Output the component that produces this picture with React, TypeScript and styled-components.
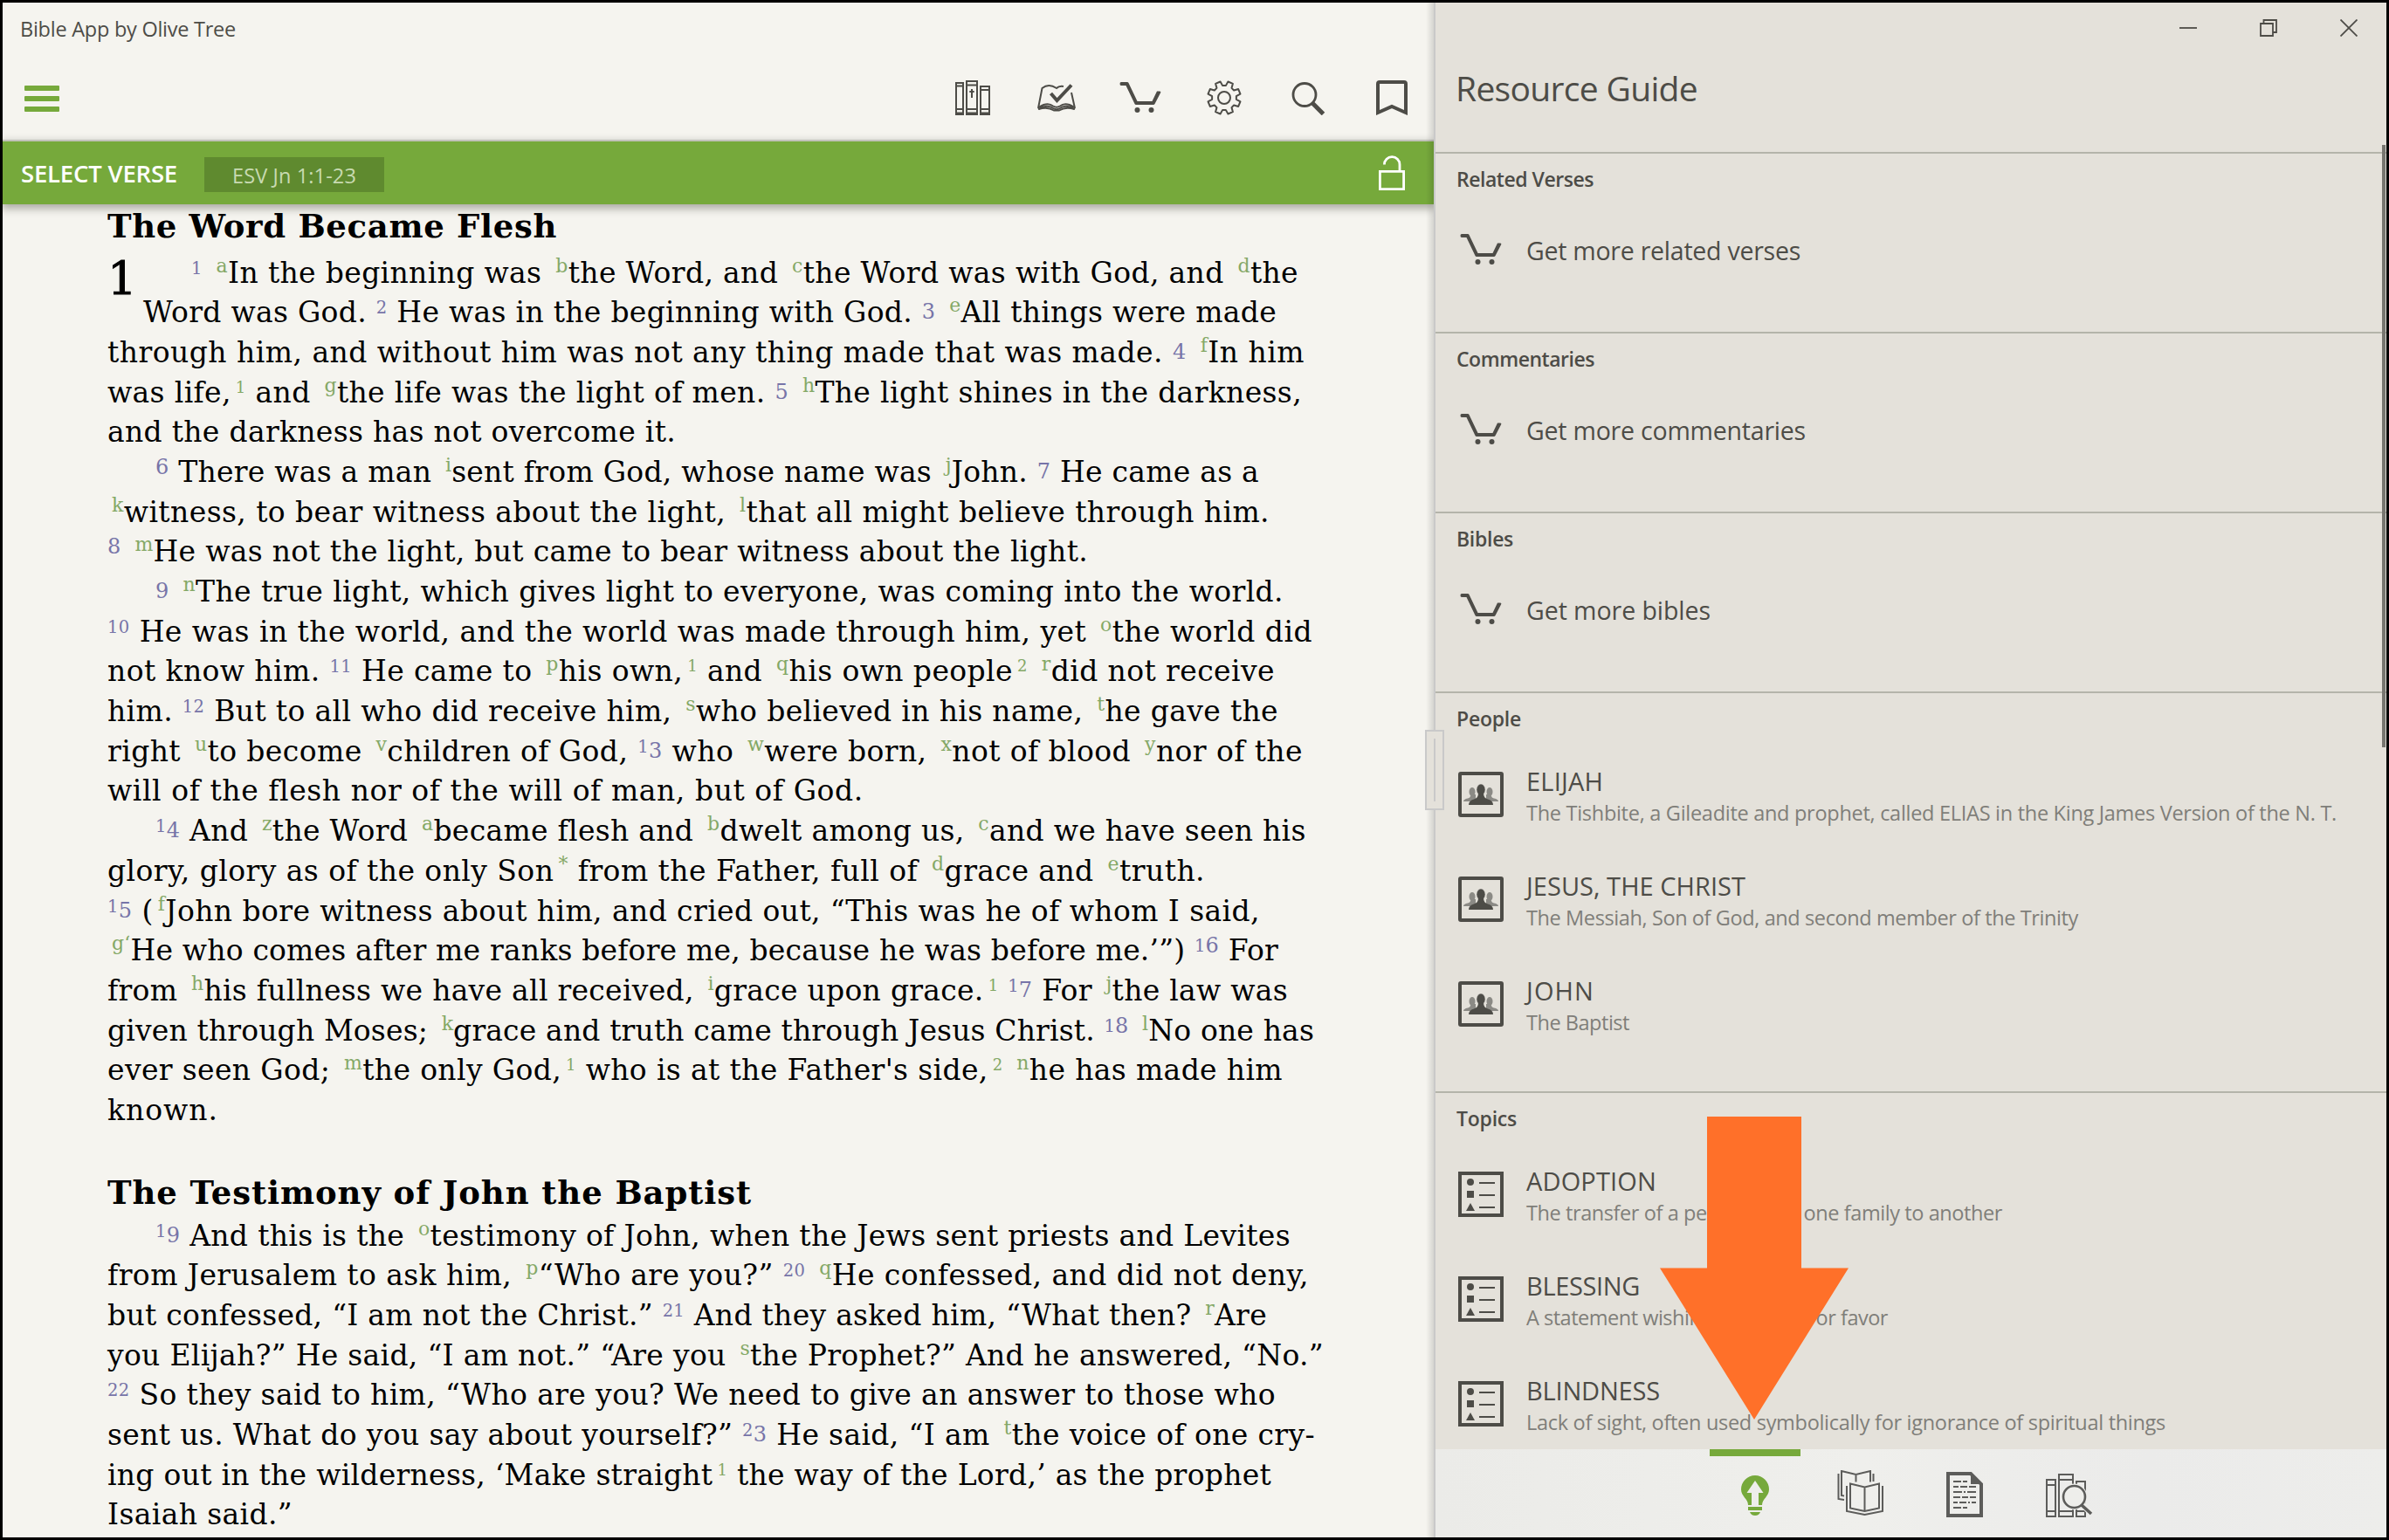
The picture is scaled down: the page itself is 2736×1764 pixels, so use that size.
import React, { useLayoutEffect, useRef, useState } from "react";
import styled, { createGlobalStyle, css } from "styled-components";

const ink = "#4d4c47";
const green = "#76a93b";
const rule = "#b4b4aa";
const edge = "#c9c9c9";
const sans = `"Open Sans", "Noto Sans", sans-serif`;
const serif = `"DejaVu Serif", serif`;

const Global = createGlobalStyle`
  * { box-sizing: border-box; }
  body { margin: 0; background: #000; }
  svg { display: block; flex: none; }
`;

/* ---------- text that is tracked to a measured width ---------- */

const Tracked = styled.span`
  white-space: pre;
`;

function Fit({ width, children }: { width: number; children: React.ReactNode }) {
  const ref = useRef<HTMLSpanElement>(null);
  const [spacing, setSpacing] = useState(0);
  useLayoutEffect(() => {
    const el = ref.current;
    if (!el) return;
    el.style.letterSpacing = "0px";
    const natural = el.getBoundingClientRect().width;
    const count = (el.textContent || "").length;
    const next = (width - natural) / Math.max(1, count);
    el.style.letterSpacing = `${next}px`;
    setSpacing(next);
  }, [width]);
  return (
    <Tracked ref={ref} style={{ letterSpacing: spacing }}>
      {children}
    </Tracked>
  );
}

/* ---------- window ---------- */

const Window = styled.div`
  display: grid;
  grid-template-columns: 1639px 2px 1fr;
  grid-template-rows: 1758px;
  width: 2736px;
  height: 1764px;
  border: 3px solid #000;
  overflow: hidden;
  font-family: ${sans};
  color: ${ink};
`;

const Reader = styled.main`
  position: relative;
  display: flex;
  flex-direction: column;
  min-width: 0;
  overflow: hidden;
  background: #f5f4ef;
  &::after {
    content: "";
    position: absolute;
    inset: 0 0 0 auto;
    width: 9px;
    background: linear-gradient(to right, rgba(0, 0, 0, 0), rgba(0, 0, 0, 0.13));
  }
`;

const Divider = styled.div`
  position: relative;
  background: ${edge};
`;

const Handle = styled.div`
  position: absolute;
  top: 833px;
  left: -10px;
  z-index: 2;
  display: flex;
  justify-content: center;
  width: 22px;
  height: 92px;
  padding: 8px 0;
  border: 2px solid ${edge};
  background: #e4e1da;
  &::before {
    content: "";
    width: 2px;
    background: ${edge};
  }
`;

const AppTitle = styled.div`
  height: 59px;
  padding: 1px 0 0 20px;
  font-size: 23.5px;
  line-height: 59px;
`;

const Toolbar = styled.div`
  display: flex;
  align-items: center;
  height: 98px;
  padding: 2px 0 0 25px;
`;

const Spacer = styled.div`
  flex: 1;
`;

const ToolButton = styled.div`
  display: flex;
  justify-content: center;
  width: 96px;
`;

const VerseBar = styled.div`
  position: relative;
  display: flex;
  flex: none;
  align-items: center;
  height: 74px;
  padding-left: 21px;
  border-top: 2px solid #c2c2ba;
  background: ${green};
  box-shadow: 0 4px 9px 1px rgba(60, 60, 50, 0.4);
`;

const VerseBarLabel = styled.div`
  width: 210px;
  padding-top: 2px;
  color: #fff;
  font-size: 27.5px;
  font-weight: 600;
  line-height: 40px;
`;

const VerseBadge = styled.div`
  width: 206px;
  height: 40px;
  margin-top: 4px;
  padding: 1px 0 0 32px;
  background: #5f8a2f;
  color: #c8dab1;
  font-size: 23.5px;
  line-height: 40px;
`;

const LockSlot = styled.div`
  padding-right: 33px;
`;

/* ---------- scripture ---------- */

const Scripture = styled.article`
  padding: 2px 0 0 120px;
  color: #000;
  font-family: ${serif};
  font-size: 33px;
`;

const Heading = styled.h2<{ $before?: number; $after: number }>`
  height: 46px;
  margin: ${(p) => p.$before || 0}px 0 ${(p) => p.$after}px;
  font-size: 37px;
  font-weight: 700;
  line-height: 46px;
`;

const Line = styled.div<{ $indent: number }>`
  height: 45.7px;
  line-height: 45.7px;
  text-indent: ${(p) => p.$indent}px;
  white-space: nowrap;
`;

const ChapterNumber = styled.div`
  float: left;
  width: 42px;
  height: 88px;
  font-size: 53px;
  line-height: 58px;
  -webkit-text-stroke: 1px #000;
`;

const Raised = styled.span<{ $kind: "low" | "tall" | "hang" | "letter" | "noteDigit" }>`
  line-height: 0;
  ${(p) =>
    ({
      low: css`font-size: 19.5px; vertical-align: 10px;`,
      tall: css`font-size: 24px; vertical-align: 9px;`,
      hang: css`font-size: 24px; vertical-align: 4px;`,
      letter: css`font-size: 22px; vertical-align: 12px;`,
      noteDigit: css`font-size: 18px; vertical-align: 11px;`,
    })[p.$kind]}
`;

const VerseNumber = styled.span`
  color: #7774a8;
`;

const Note = styled.span`
  margin-left: 5px;
  color: #84a866;
`;

const digitKind = (d: string) => ("012".includes(d) ? "low" : "68".includes(d) ? "tall" : "hang");

/* "[12]" is a verse number, "{a}" a note mark; everything else is body text. */
function Markup({ text }: { text: string }) {
  const parts = text.split(/(\[\d+\]|\{[^}]+\})/).filter(Boolean);
  return (
    <>
      {parts.map((part, i) => {
        if (part[0] === "[") {
          return (
            <VerseNumber key={i}>
              {part.slice(1, -1).split("").map((d, j) => (
                <Raised key={j} $kind={digitKind(d)}>{d}</Raised>
              ))}
            </VerseNumber>
          );
        }
        if (part[0] === "{") {
          const mark = part.slice(1, -1);
          return (
            <Note key={i}>
              <Raised $kind={/\d/.test(mark) ? "noteDigit" : "letter"}>{mark}</Raised>
            </Note>
          );
        }
        return part;
      })}
    </>
  );
}

type LineData = [text: string, start: number, end: number];

const LEFT = 123;

const first: LineData[] = [
  ["[1] {a}In the beginning was {b}the Word, and {c}the Word was with God, and {d}the", 219, 1487],
  ["Word was God. [2] He was in the beginning with God. [3] {e}All things were made", 164, 1462],
  ["through him, and without him was not any thing made that was made. [4] {f}In him", 123, 1494],
  ["was life,{1} and {g}the life was the light of men. [5] {h}The light shines in the darkness,", 123, 1491],
  ["and the darkness has not overcome it.", 123, 774],
  ["[6] There was a man {i}sent from God, whose name was {j}John. [7] He came as a", 178, 1442],
  ["{k}witness, to bear witness about the light, {l}that all might believe through him.", 123, 1454],
  ["[8] {m}He was not the light, but came to bear witness about the light.", 123, 1246],
  ["[9] {n}The true light, which gives light to everyone, was coming into the world.", 178, 1470],
  ["[10] He was in the world, and the world was made through him, yet {o}the world did", 123, 1503],
  ["not know him. [11] He came to {p}his own,{1} and {q}his own people{2} {r}did not receive", 123, 1460],
  ["him. [12] But to all who did receive him, {s}who believed in his name, {t}he gave the", 123, 1464],
  ["right {u}to become {v}children of God, [13] who {w}were born, {x}not of blood {y}nor of the", 123, 1492],
  ["will of the flesh nor of the will of man, but of God.", 123, 988],
  ["[14] And {z}the Word {a}became flesh and {b}dwelt among us, {c}and we have seen his", 178, 1495],
  ["glory, glory as of the only Son{*} from the Father, full of {d}grace and {e}truth.", 123, 1380],
  ["[15] ({f}John bore witness about him, and cried out, “This was he of whom I said,", 123, 1443],
  ["{g‘}He who comes after me ranks before me, because he was before me.’”) [16] For", 123, 1464],
  ["from {h}his fullness we have all received, {i}grace upon grace.{1} [17] For {j}the law was", 123, 1475],
  ["given through Moses; {k}grace and truth came through Jesus Christ. [18] {l}No one has", 123, 1505],
  ["ever seen God; {m}the only God,{1} who is at the Father's side,{2} {n}he has made him", 123, 1469],
  ["known.", 123, 250],
];

const second: LineData[] = [
  ["[19] And this is the {o}testimony of John, when the Jews sent priests and Levites", 178, 1478],
  ["from Jerusalem to ask him, {p}“Who are you?” [20] {q}He confessed, and did not deny,", 123, 1499],
  ["but confessed, “I am not the Christ.” [21] And they asked him, “What then? {r}Are", 123, 1451],
  ["you Elijah?” He said, “I am not.” “Are you {s}the Prophet?” And he answered, “No.”", 123, 1516],
  ["[22] So they said to him, “Who are you? We need to give an answer to those who", 123, 1461],
  ["sent us. What do you say about yourself?” [23] He said, “I am {t}the voice of one cry-", 123, 1506],
  ["ing out in the wilderness, ‘Make straight{1} the way of the Lord,’ as the prophet", 123, 1456],
  ["Isaiah said.”", 123, 335],
];

function Lines({ lines, capLines = 0 }: { lines: LineData[]; capLines?: number }) {
  return (
    <>
      {lines.map(([text, start, end], i) => (
        <Line key={i} $indent={start - LEFT - (i < capLines ? 42 : 0)}>
          <Fit width={end - start}>
            <Markup text={text} />
          </Fit>
        </Line>
      ))}
    </>
  );
}

/* ---------- resource guide ---------- */

const Guide = styled.aside`
  position: relative;
  display: flex;
  flex-direction: column;
  min-width: 0;
  background: #e4e1da;
`;

const WindowControls = styled.div`
  display: flex;
  flex: none;
  justify-content: flex-end;
  gap: 72px;
  height: 59px;
  padding: 19px 33px 0 0;
`;

const GuideTitle = styled.h1`
  flex: none;
  height: 112px;
  margin: 0;
  padding: 13px 0 0 23px;
  font-size: 39px;
  font-weight: 400;
  line-height: 52px;
`;

const Section = styled.section<{ $height: number }>`
  flex: none;
  height: ${(p) => p.$height}px;
  border-top: 2px solid ${rule};
`;

const SectionTitle = styled.h3`
  height: 58px;
  margin: 0;
  padding-left: 24px;
  font-size: 23px;
  font-weight: 600;
  line-height: 59px;
`;

const Entry = styled.div`
  display: flex;
  height: 120px;
  padding: 32px 0 0 26px;
`;

const EntryIcon = styled.div<{ $shift?: number }>`
  width: 78px;
  padding-left: ${(p) => p.$shift || 0}px;
`;

const EntryName = styled.div`
  height: 38px;
  margin-top: -7px;
  font-size: 29px;
  line-height: 36px;
`;

const EntryNote = styled.div`
  color: #7f7e79;
  font-size: 23.5px;
  line-height: 33px;
`;

const StoreLink = styled.div`
  padding-top: 1px;
  font-size: 28.5px;
  line-height: 40px;
`;

const ListArea = styled.div`
  flex: 1;
  min-height: 0;
  overflow: hidden;
`;

const ScrollThumb = styled.div`
  position: absolute;
  top: 163px;
  right: 1px;
  width: 4px;
  height: 690px;
  background: #76756f;
`;

const Tabs = styled.nav`
  display: flex;
  flex: none;
  justify-content: center;
  gap: 16px;
  height: 101px;
  padding-left: 3px;
  background: linear-gradient(90deg, #ebebe8, #efefec 45%, #ebebea 75%, #ededeb);
`;

const Tab = styled.div<{ $active?: boolean }>`
  display: flex;
  justify-content: center;
  width: 104px;
  border-top: 8px solid ${(p) => (p.$active ? green : "transparent")};
`;

const Arrow = styled.svg`
  position: absolute;
  left: 257px;
  top: 1276px;
`;

/* ---------- icons ---------- */

const MenuIcon = () => (
  <svg width="40" height="40" fill={green}>
    <rect y="6" width="40" height="6" rx="1" />
    <rect y="18" width="40" height="6" rx="1" />
    <rect y="30" width="40" height="6" rx="1" />
  </svg>
);

const LibraryIcon = () => (
  <svg width="40" height="40" fill="none" stroke={ink} strokeWidth="2">
    <path d="M1 3H9V39H1ZM1 6.500H9M1 33H9M1 37.500H9" />
    <path d="M13 1H25V39H13ZM13 5.500H25M13 33H25M13 37.500H25M19 10V20M16.300 13H21.700" />
    <path d="M29 7H39V39H29ZM29 11H39M29 33H39M29 37.500H39" />
  </svg>
);

const PlanIcon = () => (
  <svg width="44" height="40" fill="none" stroke={ink} strokeWidth="2">
    <path d="M30 7Q25 6 22 9Q13 3 5.500 9L1 32M39 14L43 32" />
    <path d="M1 33Q12 27 18 32Q22 34.500 26 32Q32 27 43 33M2 30.500Q12 24.500 18 29.500Q22 32 26 29.500Q32 24.500 42 30.500" />
    <path d="M1.500 33Q12 30 19 34.500H25Q32 30 42.500 33" />
    <path d="M15.500 15L22.500 23L39 5.500" strokeWidth="4" />
  </svg>
);

const CartIcon = () => (
  <svg width="48" height="40" fill={ink}>
    <path d="M2 2H9Q10 2 10.500 3L20.500 24H37.500L43 12.500H46Q48 12.500 47 14.500L40.500 27Q40 28 39 28H19Q18 28 17.500 27L7.500 6H2Q0.500 6 0.500 4T2 2Z" />
    <circle cx="20.500" cy="34" r="3" />
    <circle cx="36.500" cy="34" r="3" />
  </svg>
);

const gearPath = (() => {
  const teeth = 8;
  const points: string[] = [];
  for (let i = 0; i < teeth; i++) {
    const mid = (i + 0.5) * (360 / teeth);
    [[-15, 14], [-9, 19], [9, 19], [15, 14]].forEach(([offset, radius]) => {
      const a = ((mid + offset) * Math.PI) / 180;
      points.push(`${(20 + radius * Math.sin(a)).toFixed(2)} ${(20 - radius * Math.cos(a)).toFixed(2)}`);
    });
  }
  return `M${points.join("L")}Z`;
})();

const GearIcon = () => (
  <svg width="40" height="40" fill="none" stroke={ink} strokeWidth="2" strokeLinejoin="round">
    <path d={gearPath} />
    <circle cx="20" cy="20" r="7" />
  </svg>
);

const SearchIcon = () => (
  <svg width="40" height="40" fill="none" stroke={ink}>
    <circle cx="16" cy="16.500" r="13" strokeWidth="2.800" />
    <path d="M25 26L37.500 38.500" strokeWidth="5" />
  </svg>
);

const BookmarkIcon = () => (
  <svg width="36" height="40" fill="none" stroke={ink} strokeWidth="4">
    <path d="M2 37V4Q2 2 4 2H32Q34 2 34 4V37L18 30Z" />
  </svg>
);

const LockIcon = () => (
  <svg width="30" height="40" fill="none" stroke="#fff" strokeWidth="2.800">
    <path d="M1.400 18.400H28.600V38.600H1.400Z" />
    <path d="M24 18V10.500A8.800 8.800 0 0 0 6.400 10.500" />
  </svg>
);

const MinimizeIcon = () => (
  <svg width="20" height="20" stroke={ink} strokeWidth="1.800">
    <path d="M0 10H20" />
  </svg>
);

const RestoreIcon = () => (
  <svg width="20" height="20" fill="none" stroke={ink} strokeWidth="1.800">
    <path d="M1 5H15V19H1ZM4.500 5V1H19V15H15" />
  </svg>
);

const CloseIcon = () => (
  <svg width="20" height="20" stroke={ink} strokeWidth="1.800">
    <path d="M0.500 0.500L19.500 19.500M19.500 0.500L0.500 19.500" />
  </svg>
);

const PeopleIcon = () => (
  <svg width="52" height="52" fill={ink}>
    <g fill="#8b8a85">
      <ellipse cx="16" cy="23" rx="3.500" ry="5" />
      <ellipse cx="36" cy="23" rx="3.500" ry="5" />
      <path d="M6 34Q6 31.500 11 30.500Q14 30 14.500 26H20V34ZM46 34Q46 31.500 41 30.500Q38 30 37.500 26H32V34Z" />
    </g>
    <ellipse cx="26" cy="20.500" rx="5" ry="6.500" stroke="#e4e1da" strokeWidth="0.500" />
    <path d="M12 38Q12 33 18 31.500Q23 30 23 25H29Q29 30 34 31.500Q40 33 40 38Z" />
    <rect x="2" y="2" width="48" height="48" rx="1" fill="none" stroke={ink} strokeWidth="4" />
  </svg>
);

const TopicIcon = () => (
  <svg width="52" height="52" fill={ink}>
    <circle cx="14" cy="12" r="4" />
    <rect x="10" y="22" width="8" height="8" />
    <path d="M14 36L19 45H9Z" />
    <path d="M24 13H42M24 27H42M24 41H42" stroke={ink} strokeWidth="2" />
    <rect x="2" y="2" width="48" height="48" fill="none" stroke={ink} strokeWidth="4" />
  </svg>
);

const tabInk = "#5c5c5a";

const BulbIcon = styled(({ className }: { className?: string }) => (
  <svg className={className} width="32" height="46" fill={green}>
    <path
      fillRule="evenodd"
      d="M16 0A16 16 0 0 1 32 16C32 24 24 27 24 34H8C8 27 0 24 0 16A16 16 0 0 1 16 0ZM16 6L6.500 20H12V34H20V20H25.500Z"
    />
    <path d="M8 36H24V40H8ZM10 42H22Q20.500 46 16 46T10 42Z" />
  </svg>
))`
  margin-top: 22px;
`;

const BooksIcon = styled(({ className }: { className?: string }) => (
  <svg className={className} width="53" height="52" fill="none" stroke={tabInk} strokeWidth="2">
    <path d="M15 15.500L31.500 19.500L48 15.500V43.500L31.500 47L15 43.500ZM31.500 19.500V47" />
    <path d="M11 18V47L31.500 51L52 47V18" />
    <path d="M8 29.500L5 29V1L21.500 5L38 1V13.500M21.500 5V13.500M1.500 4V33L8 34M41.500 4V13" />
  </svg>
))`
  margin-top: 16px;
`;

const NotesIcon = styled(({ className }: { className?: string }) => (
  <svg className={className} width="42" height="52" fill="none" stroke={tabInk} strokeWidth="2">
    <path d="M2 2H28L40 14V50H2Z" strokeWidth="4" />
    <path d="M28 1V14H41Z" fill={tabInk} stroke="none" />
    <path d="M8 11H17M19 11H24M8 17H14M16 17H24M26 17H34M8 23H18M20 23H22M24 23H34M8 29H16M18 29H25M27 29H34M8 35H13M15 35H23M25 35H27M29 35H34M8 41H17M19 41H24" />
  </svg>
))`
  margin-top: 18px;
`;

const LookupIcon = styled(({ className }: { className?: string }) => (
  <svg className={className} width="54" height="50" fill="none" stroke={tabInk} strokeWidth="2">
    <path d="M1 7H11V49H1ZM1 13H11M1 43H11M15 1H31V49H15ZM15 7H31M15 43H31M35 9H45V49H35ZM35 43H45" />
    <circle cx="32.500" cy="26.500" r="15" fill="#eeeeeb" stroke="none" />
    <path d="M42 35L52 46" stroke="#eeeeeb" strokeWidth="7" />
    <circle cx="32.500" cy="26.500" r="12.500" strokeWidth="2.600" />
    <path d="M41 36L52 46" strokeWidth="3.600" />
  </svg>
))`
  margin-top: 20px;
`;

/* ---------- data ---------- */

const stores = [
  { title: "Related Verses", titleWidth: 157, link: "Get more related verses", width: 314 },
  { title: "Commentaries", titleWidth: 158, link: "Get more commentaries", width: 320 },
  { title: "Bibles", titleWidth: 65, link: "Get more bibles", width: 211 },
];

const people = [
  { name: "ELIJAH", nameWidth: 88, note: "The Tishbite, a Gileadite and prophet, called ELIAS in the King James Version of the N. T.", noteWidth: 928 },
  { name: "JESUS, THE CHRIST", nameWidth: 251, note: "The Messiah, Son of God, and second member of the Trinity", noteWidth: 632 },
  { name: "JOHN", nameWidth: 78, note: "The Baptist", noteWidth: 118 },
];

const topics = [
  { name: "ADOPTION", nameWidth: 149, note: "The transfer of a person from one family to another", noteWidth: 545 },
  { name: "BLESSING", nameWidth: 130, note: "A statement wishing happiness or favor", noteWidth: 414 },
  { name: "BLINDNESS", nameWidth: 153, note: "Lack of sight, often used symbolically for ignorance of spiritual things", noteWidth: 732 },
];

function Entries({ items, icon }: { items: typeof people; icon: React.ReactNode }) {
  return (
    <>
      {items.map((item) => (
        <Entry key={item.name}>
          <EntryIcon>{icon}</EntryIcon>
          <div>
            <EntryName><Fit width={item.nameWidth}>{item.name}</Fit></EntryName>
            <EntryNote><Fit width={item.noteWidth}>{item.note}</Fit></EntryNote>
          </div>
        </Entry>
      ))}
    </>
  );
}

export default function App() {
  return (
    <>
      <Global />
      <Window>
        <Reader>
          <AppTitle><Fit width={247}>Bible App by Olive Tree</Fit></AppTitle>
          <Toolbar>
            <MenuIcon />
            <Spacer />
            <ToolButton><LibraryIcon /></ToolButton>
            <ToolButton><PlanIcon /></ToolButton>
            <ToolButton><CartIcon /></ToolButton>
            <ToolButton><GearIcon /></ToolButton>
            <ToolButton><SearchIcon /></ToolButton>
            <ToolButton><BookmarkIcon /></ToolButton>
          </Toolbar>
          <VerseBar>
            <VerseBarLabel><Fit width={179}>SELECT VERSE</Fit></VerseBarLabel>
            <VerseBadge><Fit width={142}>ESV Jn 1:1-23</Fit></VerseBadge>
            <Spacer />
            <LockSlot><LockIcon /></LockSlot>
          </VerseBar>
          <Scripture>
            <Heading $after={7.5}><Fit width={515}>The Word Became Flesh</Fit></Heading>
            <ChapterNumber>1</ChapterNumber>
            <Lines lines={first} capLines={2} />
            <Heading $before={48} $after={4}><Fit width={738}>The Testimony of John the Baptist</Fit></Heading>
            <Lines lines={second} />
          </Scripture>
        </Reader>
        <Divider>
          <Handle />
        </Divider>
        <Guide>
          <WindowControls>
            <MinimizeIcon />
            <RestoreIcon />
            <CloseIcon />
          </WindowControls>
          <GuideTitle><Fit width={277}>Resource Guide</Fit></GuideTitle>
          <ListArea>
            {stores.map((s) => (
              <Section key={s.title} $height={206}>
                <SectionTitle><Fit width={s.titleWidth}>{s.title}</Fit></SectionTitle>
                <Entry>
                  <EntryIcon $shift={2}><CartIcon /></EntryIcon>
                  <StoreLink><Fit width={s.width}>{s.link}</Fit></StoreLink>
                </Entry>
              </Section>
            ))}
            <Section $height={458}>
              <SectionTitle><Fit width={74}>People</Fit></SectionTitle>
              <Entries items={people} icon={<PeopleIcon />} />
            </Section>
            <Section $height={458}>
              <SectionTitle><Fit width={69}>Topics</Fit></SectionTitle>
              <Entries items={topics} icon={<TopicIcon />} />
            </Section>
          </ListArea>
          <Tabs>
            <Tab $active><BulbIcon /></Tab>
            <Tab><BooksIcon /></Tab>
            <Tab><NotesIcon /></Tab>
            <Tab><LookupIcon /></Tab>
          </Tabs>
          <ScrollThumb />
          <Arrow width="216" height="348" fill="#ff7029">
            <path d="M54 0H162V173.500H216L108 347L0 173.500H54Z" />
          </Arrow>
        </Guide>
      </Window>
    </>
  );
}
